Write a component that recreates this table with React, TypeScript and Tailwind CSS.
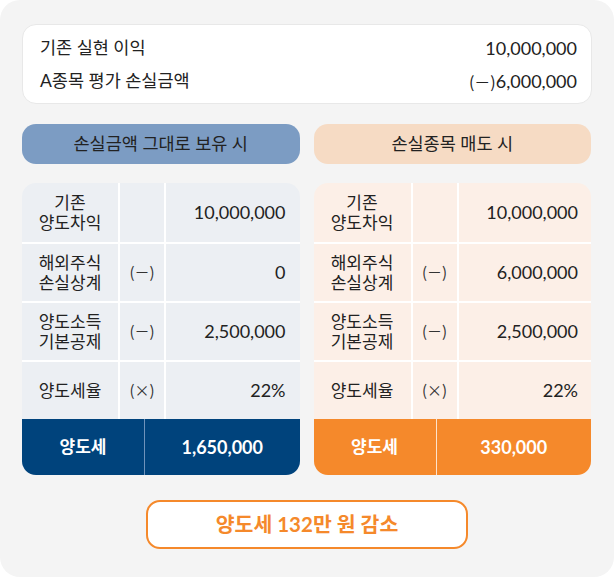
const rows = [
  { label: ["기존", "양도차익"], op: "", left: "10,000,000", right: "10,000,000" },
  { label: ["해외주식", "손실상계"], op: "(－)", left: "0", right: "6,000,000" },
  { label: ["양도소득", "기본공제"], op: "(－)", left: "2,500,000", right: "2,500,000" },
  { label: ["양도세율"], op: "(×)", left: "22%", right: "22%" },
];

const cjk = { fontFamily: '"Noto Sans CJK KR", sans-serif' };

function Table({ side }: { side: "left" | "right" }) {
  const isLeft = side === "left";
  return (
    <div className="flex flex-col">
      <div
        className={`h-[40px] rounded-[14px] flex items-center justify-center text-[17.5px] text-[#222] ${
          isLeft ? "bg-[#7c9cc3]" : "bg-[#f6dbc4]"
        }`}
      >
        {isLeft ? "손실금액 그대로 보유 시" : "손실종목 매도 시"}
      </div>
      <div
        className={`mt-[19px] rounded-[14px] overflow-hidden ${isLeft ? "bg-[#eceff3]" : "bg-[#fcefe7]"}`}
      >
        {rows.map((r, i) => (
          <div
            key={i}
            className={`grid h-[59px] text-[18px] text-[#222] ${
              isLeft ? "grid-cols-[98px_46px_1fr]" : "grid-cols-[99px_46px_1fr]"
            } ${i > 0 ? "border-t-2 border-white" : ""}`}
          >
            <div className="flex flex-col items-center justify-center text-[17px] leading-[20px] border-r-2 border-white">
              {r.label.map((l) => (
                <span key={l}>{l}</span>
              ))}
            </div>
            <div
              className="flex items-center justify-center border-r-2 border-white text-[15px] text-[#333]"
              style={cjk}
            >
              {r.op}
            </div>
            <div className={`flex items-center justify-end ${isLeft ? "pr-[14px]" : "pr-[13px]"}`}>
              {isLeft ? r.left : r.right}
            </div>
          </div>
        ))}
        <div
          className={`grid h-[56px] text-white font-bold text-[18px] ${
            isLeft ? "bg-[#00437c] grid-cols-[123px_1fr]" : "bg-[#f5892b] grid-cols-[123px_1fr]"
          }`}
        >
          <div
            className={`flex items-center justify-center text-[17px] border-r ${
              isLeft ? "border-[#6f93bb]" : "border-[#fde3cc]"
            }`}
          >
            양도세
          </div>
          <div className="flex items-center justify-center">{isLeft ? "1,650,000" : "330,000"}</div>
        </div>
      </div>
    </div>
  );
}

export default function App() {
  return (
    <div className="w-[614px] h-[577px] bg-white" style={{ fontFamily: 'Lato, "Noto Sans CJK KR", sans-serif' }}>
      <div className="h-full rounded-[20px] bg-[#f4f4f4] px-[22px] pt-[24px] flex flex-col">
        <div className="h-[80px] rounded-[14px] bg-white border border-[#e8e8e8] pl-[17px] pr-[14px] flex flex-col justify-center gap-[11px] text-[18px] text-[#222]">
          <div className="flex justify-between leading-[22px]">
            <span className="text-[17.5px]">기존 실현 이익</span>
            <span>10,000,000</span>
          </div>
          <div className="flex justify-between leading-[22px]">
            <span className="text-[17.5px]">A종목 평가 손실금액</span>
            <span>
              <span style={cjk} className="text-[16px]">(－)</span>6,000,000
            </span>
          </div>
        </div>
        <div className="mt-[20px] grid grid-cols-2 gap-[14px] pr-[1px]">
          <Table side="left" />
          <Table side="right" />
        </div>
        <div className="mt-[25px] flex justify-center">
          <div className="w-[322px] h-[49px] rounded-[14px] border-2 border-[#f5892b] bg-white flex items-center justify-center text-[#f5892b] font-bold text-[20.5px]">
            양도세 132만 원 감소
          </div>
        </div>
      </div>
    </div>
  );
}
